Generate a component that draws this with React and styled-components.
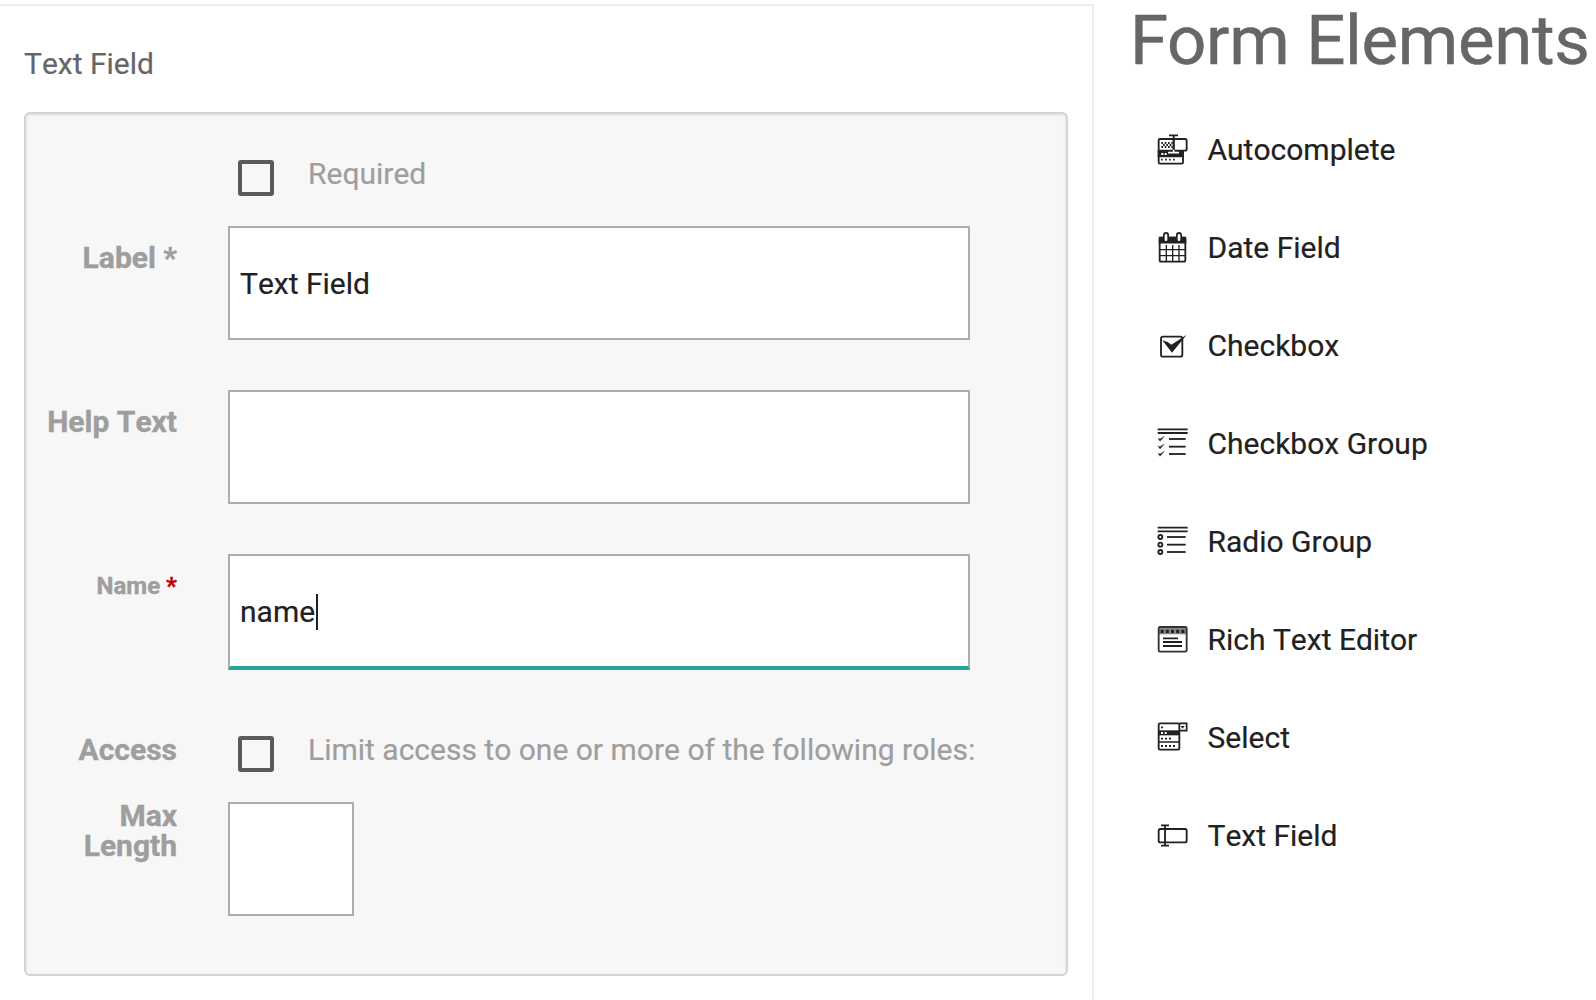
import React from "react";
import styled, { createGlobalStyle, css } from "styled-components";

const Global = createGlobalStyle`
  * { box-sizing: border-box; }
  html, body { margin: 0; background: #fff; overflow: hidden; }
  body {
    font: 30px/30px Roboto, "Liberation Sans", sans-serif;
    font-kerning: none;
    -webkit-text-stroke-width: 0.2px;
    color: #212121;
  }
`;

const Page = styled.div`
  display: flex;
  height: 1000px;
  overflow: hidden;
  background: #fff;
`;

const Editor = styled.main`
  width: 1094px;
  margin-top: 4px;
  padding: 43px 24px 0;
  border-top: 2px solid #eee;
  border-right: 2px solid #eee;
`;

const EditorTitle = styled.div`
  height: 63px;
  color: #666;
`;

const Well = styled.form`
  width: 1044px;
  height: 864px;
  padding: 34px 20px 0 0;
  border: 2px solid #d4d4d4;
  border-radius: 6px;
  background: #f7f7f7;
  box-shadow: inset 0 1px 3px rgba(0, 0, 0, 0.1);
`;

const Row = styled.div`
  display: flex;
  height: ${(p) => p.$height}px;
`;

const Label = styled.label`
  flex: none;
  width: 151px;
  margin-right: 51px;
  padding-top: ${(p) => p.$top ?? 17}px;
  text-align: right;
  font-weight: 700;
  font-size: ${(p) => (p.$small ? 24 : 30)}px;
  -webkit-text-stroke-width: 0.4px;
  color: #9e9e9e;
`;

const LabelLine = styled.span`
  display: block;
  height: 30px;
  margin-top: ${(p) => (p.$first ? -1 : 0)}px;
`;

const Star = styled.span`
  color: #c40000;
`;

const Field = styled.div`
  display: flex;
  align-items: center;
  width: ${(p) => p.$width ?? 742}px;
  height: 114px;
  padding: 2px 10px 0;
  border: 2px solid #aeaea9;
  background: #fff;
  ${(p) =>
    p.$focused &&
    css`
      height: 116px;
      border-bottom: 4px solid #26a69a;
    `}
`;

const Caret = styled.span`
  width: 2px;
  height: 36px;
  margin-left: 0.6px;
  background: #212121;
`;

const CheckLine = styled.div`
  display: flex;
  padding-left: 10px;
  color: #9e9e9e;
  white-space: nowrap;
`;

const Box = styled.span`
  width: 36px;
  height: 36px;
  margin: 12px 34px 0 0;
  border: 4px solid #5a5a5a;
  border-radius: 3px;
`;

const CheckText = styled.span`
  padding-top: 11px;
`;

const Sidebar = styled.aside`
  flex: 1;
  min-width: 0;
  padding-left: 36px;
`;

const Heading = styled.h1`
  height: 100px;
  margin: 0;
  padding-top: 1px;
  font-size: 69px;
  font-weight: 400;
  font-kerning: normal;
  letter-spacing: -0.33px;
  line-height: 80px;
  white-space: nowrap;
  -webkit-text-stroke-width: 0.5px;
  color: #666;
`;

const Item = styled.div`
  display: flex;
  align-items: center;
  height: 98px;
  padding-left: 20px;
`;

const ItemName = styled.span`
  padding-top: 2px;
`;

const Glyph = styled.svg`
  width: 48px;
  height: 48px;
  margin-right: 9.5px;
`;

const Ink = ({ children }) => (
  <Glyph viewBox="0 0 144 144" fill="none" stroke="#212121" strokeWidth="5.5">
    {children}
  </Glyph>
);

const AutocompleteIcon = () => (
  <Ink>
    <rect x="26" y="42" width="73" height="74" rx="4" />
    <path d="M26 77h73v17h-73z" fill="#212121" />
    <path d="M34 54h34M34 66h34M39 60h30" strokeDasharray="5 5" />
    <path d="M34 87h18" stroke="#fff" strokeDasharray="6 4" />
    <path d="M33 104h42" strokeDasharray="5 7" />
    <rect x="71" y="42" width="39" height="35" rx="5" fill="#fff" />
    <path d="M57 31h27M71 31v48" />
    <path d="M54 83h33M71 74v9" stroke="#fff" strokeWidth="5" />
  </Ink>
);

const DateIcon = () => (
  <Ink>
    <rect x="29" y="44" width="77" height="72" rx="5" />
    <path d="M29 44h77v15h-77z" fill="#212121" />
    <path d="M49 66v50M68 66v50M87 66v50M29 80h77M29 98h77" strokeWidth="4" />
    <path d="M48 51V36M87 51V36" strokeWidth="18" strokeLinecap="round" />
    <path d="M48 50V37M87 50V37" stroke="#fff" strokeWidth="8" strokeLinecap="round" />
  </Ink>
);

const CheckboxIcon = () => (
  <Ink>
    <rect x="33" y="47" width="64" height="60" rx="6" />
    <path d="M37 58L53 63L64 71L110 41L66 95Z" fill="#212121" stroke="none" />
  </Ink>
);

const ticks = [60, 83, 105];

const CheckboxGroupIcon = () => (
  <Ink>
    <path d="M23 31h90M23 42h90" />
    {ticks.map((y) => (
      <React.Fragment key={y}>
        <path d={`M57 ${y}h50`} />
        <path d={`M24 ${y - 2}l6 2l13-8l-13 15z`} fill="#212121" strokeWidth="1" />
      </React.Fragment>
    ))}
  </Ink>
);

const RadioGroupIcon = () => (
  <Ink>
    <path d="M23 32h90M23 43h90" />
    {ticks.map((y) => (
      <React.Fragment key={y}>
        <path d={`M51 ${y}h56`} />
        <circle cx="31" cy={y} r="6" />
      </React.Fragment>
    ))}
  </Ink>
);

const RichTextIcon = () => (
  <Ink>
    <path d="M26 48h84" stroke="#888" strokeWidth="20" />
    <path d="M32 49h74" strokeWidth="10" strokeDasharray="9 6.5" />
    <rect x="26" y="36" width="84" height="74" rx="4" stroke="#333" />
    <path d="M39 70h45M39 81h57M39 93h57" />
  </Ink>
);

const SelectIcon = () => (
  <Ink>
    <rect x="26" y="31" width="62" height="79" rx="4" />
    <path d="M26 52h62v15h-62z" fill="#212121" stroke="none" />
    <path d="M26 87h62M88 31h22v22H88" strokeWidth="5" />
    <path d="M33 43h6" />
    <path d="M33 60h19" stroke="#fff" strokeDasharray="6 5" />
    <path d="M33 77h31M33 99h42" strokeDasharray="6 6" />
    <path d="M92 39h12l-6 8z" fill="#212121" stroke="none" />
  </Ink>
);

const TextFieldIcon = () => (
  <Ink>
    <rect x="26" y="54" width="84" height="40" rx="5" />
    <path d="M33 43h24M33 104h24M45 43v61" />
  </Ink>
);

const elements = [
  ["Autocomplete", AutocompleteIcon],
  ["Date Field", DateIcon],
  ["Checkbox", CheckboxIcon],
  ["Checkbox Group", CheckboxGroupIcon],
  ["Radio Group", RadioGroupIcon],
  ["Rich Text Editor", RichTextIcon],
  ["Select", SelectIcon],
  ["Text Field", TextFieldIcon],
];

export default function App() {
  return (
    <>
      <Global />
      <Page>
        <Editor>
          <EditorTitle>Text Field</EditorTitle>
          <Well>
            <Row $height={78}>
              <Label />
              <CheckLine>
                <Box />
                <CheckText>Required</CheckText>
              </CheckLine>
            </Row>
            <Row $height={164}>
              <Label>Label *</Label>
              <Field>Text Field</Field>
            </Row>
            <Row $height={164}>
              <Label>Help Text</Label>
              <Field />
            </Row>
            <Row $height={170}>
              <Label $small>
                Name <Star>*</Star>
              </Label>
              <Field $focused>
                name
                <Caret />
              </Field>
            </Row>
            <Row $height={78}>
              <Label $top={11}>Access</Label>
              <CheckLine>
                <Box />
                <CheckText>Limit access to one or more of the following roles:</CheckText>
              </CheckLine>
            </Row>
            <Row $height={114}>
              <Label $top={0}>
                <LabelLine $first>Max</LabelLine>
                <LabelLine>Length</LabelLine>
              </Label>
              <Field $width={126} />
            </Row>
          </Well>
        </Editor>
        <Sidebar>
          <Heading>Form Elements</Heading>
          {elements.map(([name, Icon]) => (
            <Item key={name}>
              <Icon />
              <ItemName>{name}</ItemName>
            </Item>
          ))}
        </Sidebar>
      </Page>
    </>
  );
}
